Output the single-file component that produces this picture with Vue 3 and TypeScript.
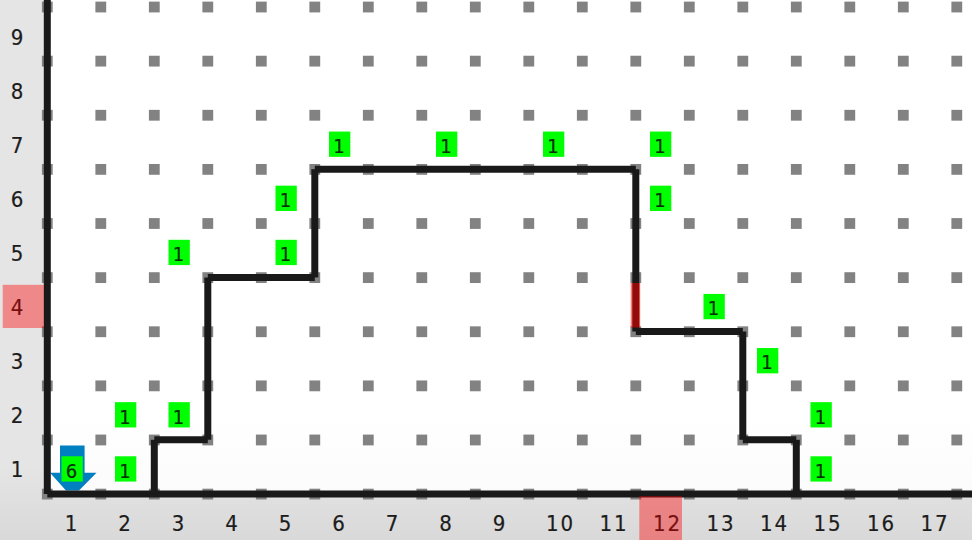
<script setup lang="ts">
type Point = [number, number]

const originX = 47.3
const originY = 493.9
const stepX = 53.5
const stepY = 54.12

const nodeX = (n: number): number => originX + n * stepX
const nodeY = (n: number): number => originY - n * stepY

const dots: Point[] = []
for (let r = 0; r <= 9; r++) {
  for (let c = 0; c <= 17; c++) dots.push([nodeX(c), nodeY(r)])
}

// Corner nodes of the building outline, in grid units.
const outline: Point[] = [
  [2, 0], [2, 1], [3, 1], [3, 4], [5, 4], [5, 6],
  [11, 6], [11, 3], [13, 3], [13, 1], [14, 1], [14, 0],
]
const walls = outline.slice(1).map(([c, r], i) => ({
  x1: nodeX(outline[i][0]),
  y1: nodeY(outline[i][1]),
  x2: nodeX(c),
  y2: nodeY(r),
}))

// Beepers by column and row.
const beepers: Point[] = [
  [2, 1], [2, 2], [3, 2], [3, 5], [5, 5], [5, 6], [6, 7], [8, 7], [10, 7],
  [12, 7], [12, 6], [13, 4], [14, 3], [15, 2], [15, 1],
]
const cells = [
  { c: 1, r: 1, n: 6 },
  ...beepers.map(([c, r]) => ({ c, r, n: 1 })),
]
const columns = Array.from({ length: 17 }, (_, i) => i + 1)
const rows = Array.from({ length: 9 }, (_, i) => i + 1)
const labelX = (c: number): number => nodeX(c) - 29.8 + (c > 9 ? 8 : 0)
</script>

<template>
  <main class="world">
    <svg class="map" width="972" height="540" viewBox="0 0 972 540">
      <defs>
        <linearGradient id="axis" x1="0" y1="0" x2="0" y2="1">
          <stop offset="0" stop-color="#e5e5e5" />
          <stop offset="0.86" stop-color="#e5e5e5" />
          <stop offset="1" stop-color="#d9d9d9" />
        </linearGradient>
        <linearGradient id="floor" x1="0" y1="0" x2="0" y2="1">
          <stop offset="0.84" stop-color="#ffffff" />
          <stop offset="1" stop-color="#fbfbfb" />
        </linearGradient>
      </defs>
      <rect width="972" height="540" fill="url(#axis)" />
      <rect x="47" y="0" width="925" height="494" fill="url(#floor)" />
      <rect
        v-for="([x, y], i) in dots" :key="i" class="dot"
        :x="x - 5.4" :y="y - 5.2" width="10.8" height="10.8"
      />
      <path class="robot" d="M60 445.5H84.6V472.7H96.5L79 490.5H66L50 472.7H60Z" />
      <line class="wall" :x1="originX" y1="0" :x2="originX" :y2="originY" />
      <line class="wall" :x1="originX" :y1="originY" x2="972" :y2="originY" />
      <line v-for="(w, i) in walls" :key="i" class="wall" v-bind="w" />
      <g v-for="b in cells" :key="`${b.c}-${b.r}`">
        <rect
          class="beeper" :x="nodeX(b.c) - 39.3" :y="nodeY(b.r) + 16.5"
          width="21.3" height="25.3"
        />
        <text class="count" :x="nodeX(b.c) - 29.3" :y="nodeY(b.r) + 37.9">{{ b.n }}</text>
      </g>
      <text v-for="r in rows" :key="`r${r}`" class="label" x="17" :y="nodeY(r) + 37.7">{{ r }}</text>
      <text v-for="c in columns" :key="`c${c}`" class="label" :class="{ wide: c > 9 }" :x="labelX(c)" y="531.4">{{ c }}</text>
      <rect class="mark" x="2.7" y="284.8" width="41.3" height="43.2" />
      <rect class="mark" x="639.3" y="496" width="42.7" height="44" />
      <rect class="mark edge" x="630.7" y="283" width="9.5" height="44.5" />
    </svg>
  </main>
</template>

<style scoped>
.world { width: 972px; height: 540px; overflow: hidden; }
.map { display: block; }
.dot { fill: #828282; }
.wall { stroke: #191919; stroke-width: 7; }
.robot { fill: #007fc1; }
.beeper { fill: #00ff00; }
.count, .label {
  font-family: "DejaVu Sans Condensed", "DejaVu Sans", sans-serif;
  font-stretch: condensed;
  font-size: 22px;
  text-anchor: middle;
  fill: #1c1c1c;
  stroke: #1c1c1c;
  stroke-width: 0.2;
}
.count { font-size: 20px; fill: #043004; stroke: #043004; }
.wide { letter-spacing: 2px; }
.mark { fill: #ff0000; fill-opacity: 0.4; }
.edge { fill-opacity: 0.53; }
</style>

<style>
body { overflow: hidden; }
</style>
